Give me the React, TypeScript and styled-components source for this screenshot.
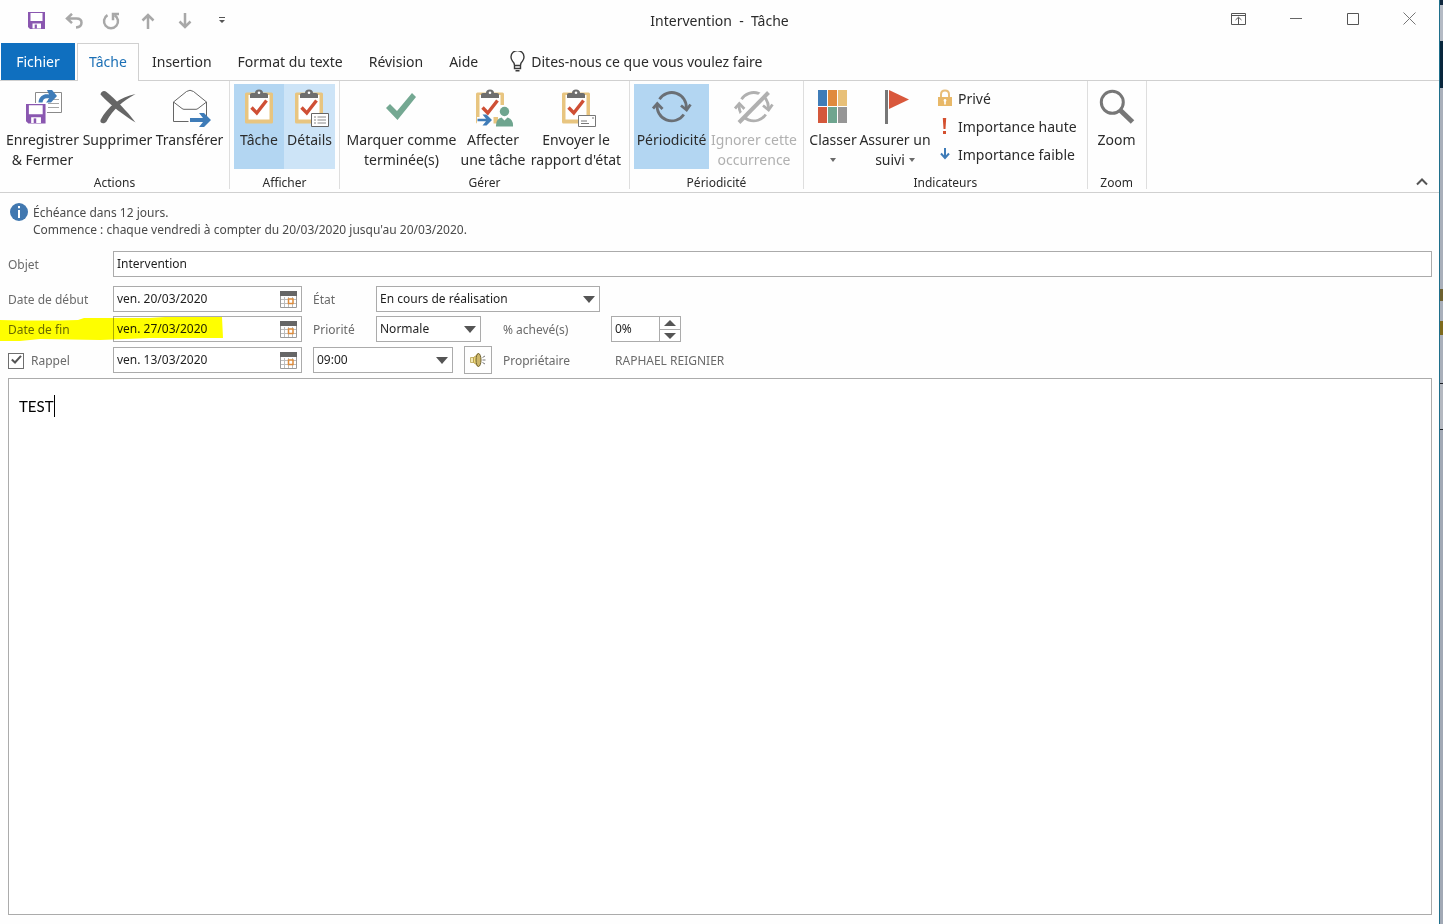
import React from "react";
import styled, { createGlobalStyle, css } from "styled-components";

const GlobalStyle = createGlobalStyle`
  *, *::before, *::after { box-sizing: border-box; }
  body {
    margin: 0;
    background: #fefefe;
    color: #2b2b2b;
    font-family: "Noto Sans", "Open Sans", sans-serif;
    font-size: 14px;
  }
  button, input, select, textarea { font: inherit; color: inherit; margin: 0; }
  button { background: none; border: 0; padding: 0; }
  svg { display: block; flex: none; }
`;

/* ---------- frame ---------- */

const Screen = styled.div`
  display: flex;
  min-height: 100vh;
`;

const Window = styled.div`
  flex: 1;
  min-width: 0;
  display: flex;
  flex-direction: column;
`;

const Behind = styled.div`
  width: 4px;
  border-left: 1px solid #1f6f8b;
  background: linear-gradient(
    #10283f 0 5px,
    #b4bac4 5px 41px,
    #08263c 41px 88px,
    #a9afba 88px 289px,
    #6d6130 289px 301px,
    #a9afba 301px 321px,
    #7d6a1c 321px 335px,
    #a9afba 335px 383px,
    #1c1f24 383px 384px,
    #b4b8c0 384px 429px,
    #1c1f24 429px 430px,
    #a2a9b5 430px
  );
`;

/* ---------- title bar ---------- */

const TitleBar = styled.header`
  display: grid;
  grid-template-columns: 1fr auto 1fr;
  align-items: center;
  height: 43px;
  padding-bottom: 2px;
`;

const QuickBar = styled.div`
  display: flex;
  padding-left: 18px;
`;

const QuickButton = styled.button`
  width: 37px;
  height: 32px;
  display: grid;
  place-items: center;
`;

const Title = styled.h1`
  margin: 0;
  font-size: 14px;
  font-weight: 400;
  line-height: 20px;
  white-space: pre;
`;

const Controls = styled.div`
  display: flex;
  justify-content: flex-end;
  padding: 0 1px 4px 0;
`;

const ControlButton = styled.button`
  width: 57px;
  height: 36px;
  display: grid;
  place-items: center;
`;

/* ---------- tabs ---------- */

const TabBar = styled.nav`
  display: flex;
  height: 38px;
  padding-left: 1px;
  border-bottom: 1px solid #d0d0d0;
`;

const Tab = styled.button<{ $kind?: "file" | "active" }>`
  height: 37px;
  padding: 0 13px;
  font-size: 14px;
  white-space: nowrap;
  ${(p) =>
    p.$kind === "file" &&
    css`
      width: 74px;
      margin-right: 2px;
      background: #0f6fbf;
      color: #fff;
    `}
  ${(p) =>
    p.$kind === "active" &&
    css`
      width: 62px;
      height: 38px;
      padding: 0 0 2px;
      border: 1px solid #d0d0d0;
      border-bottom: 0;
      background: #fefefe;
      color: #1b6fb5;
    `}
`;

const TellMe = styled.button`
  display: flex;
  align-items: center;
  gap: 6px;
  height: 37px;
  padding-left: 19px;
  white-space: nowrap;
`;

/* ---------- ribbon ---------- */

const Ribbon = styled.div`
  display: flex;
  height: 112px;
  border-bottom: 1px solid #d0d0d0;
`;

const Group = styled.section`
  display: flex;
  flex-direction: column;
  align-items: center;
  padding: 3px 4px 0;
  border-right: 1px solid #dedede;
  margin-bottom: 3px;
`;

const GroupBody = styled.div`
  display: flex;
  flex: none;
  height: 85px;
`;

const GroupName = styled.h2`
  margin: 5px 0 0;
  font-size: 12px;
  font-weight: 400;
  line-height: 18px;
`;

const BigButton = styled.button<{ $w: number; $fill?: string }>`
  display: flex;
  flex-direction: column;
  align-items: center;
  width: ${(p) => p.$w}px;
  padding-top: 3px;
  gap: 3px;
  background: ${(p) => p.$fill ?? "none"};
  line-height: 20px;
  white-space: nowrap;
  &:disabled { color: #b0b0b0; }
`;

const WithCaret = styled.span`
  display: flex;
  align-items: center;
  justify-content: center;
  gap: 4px;
  height: 20px;
`;

const SmallList = styled.div`
  display: flex;
  flex-direction: column;
  padding: 0 6px 0 5px;
`;

const SmallButton = styled.button`
  display: flex;
  align-items: center;
  gap: 5px;
  height: 28px;
  white-space: nowrap;
`;

const Collapse = styled.button`
  align-self: flex-end;
  margin: 0 11px 3px auto;
  padding: 3px 0;
`;

/* ---------- form ---------- */

const InfoBar = styled.div`
  display: flex;
  gap: 5px;
  padding: 10px 10px 0;
  height: 58px;
  color: #4a4a4a;
  font-size: 12px;
  line-height: 17px;
`;

const InfoText = styled.p`
  margin: 0;
  padding-top: 1px;
`;

const Form = styled.form`
  display: flex;
  flex-direction: column;
  gap: 4px;
  padding: 0 7px 0 8px;
  font-size: 12px;
`;

const Row = styled.div<{ $after?: number }>`
  position: relative;
  display: flex;
  height: 26px;
  align-items: center;
  margin-bottom: ${(p) => p.$after ?? 0}px;
`;

const Label = styled.label<{ $w: number }>`
  display: flex;
  align-items: center;
  width: ${(p) => p.$w}px;
  padding-top: 1px;
  color: #6a6a6a;
  white-space: nowrap;
`;

const Frame = styled.div<{ $w?: number; $after?: number }>`
  position: relative;
  display: flex;
  ${(p) => (p.$w ? `width: ${p.$w}px;` : "flex: 1;")}
  height: 26px;
  margin-right: ${(p) => p.$after ?? 0}px;
  border: 1px solid #ababab;
  background: #fff;
  color: #1e1e1e;
`;

const TextInput = styled.input`
  flex: 1;
  min-width: 0;
  padding: 0 3px 2px;
  border: 0;
  outline: 0;
  background: none;
`;

const DateButton = styled.button`
  width: 26px;
  display: grid;
  place-items: center;
`;

const SelectBox = styled.select`
  flex: 1;
  appearance: none;
  padding: 0 3px 2px;
  border: 0;
  outline: 0;
  background: none;
`;

const SelectArrow = styled.span`
  position: absolute;
  right: 4px;
  top: 9px;
  pointer-events: none;
`;

const Spinner = styled.div`
  display: grid;
  grid-template-rows: 1fr 1fr;
  width: 21px;
  border-left: 1px solid #ababab;
`;

const SpinButton = styled.button`
  display: grid;
  place-items: center;
  & + & { border-top: 1px solid #ababab; }
`;

const SoundButton = styled.button`
  display: grid;
  place-items: center;
  width: 28px;
  height: 28px;
  margin-right: 11px;
  border: 1px solid #ababab;
`;

const Check = styled.input`
  appearance: none;
  width: 16px;
  height: 16px;
  margin-right: 7px;
  border: 1px solid #6e6e6e;
  background: #fff;
`;

const Tick = styled.svg`
  position: absolute;
  left: 3px;
  top: 8px;
  pointer-events: none;
`;

const Owner = styled.output`
  color: #6a6a6a;
`;

const Marker = styled.svg`
  position: absolute;
  left: -8px;
  top: 0;
  mix-blend-mode: multiply;
  pointer-events: none;
`;

const Editor = styled.div`
  position: relative;
  flex: 1;
  display: flex;
  margin: 5px 7px 9px 8px;
  border: 1px solid #ababab;
  background: #fff;
`;

const Body = styled.textarea`
  flex: 1;
  padding: 16px 10px;
  border: 0;
  outline: 0;
  resize: none;
  background: none;
  color: #000;
  font: 15px/22px Lato, sans-serif;
`;

const Caret = styled.span`
  position: absolute;
  left: 45px;
  top: 16px;
  width: 1px;
  height: 22px;
  background: #000;
`;

/* ---------- icons ---------- */

const Floppy = ({ x = 0, y = 0, s = 1 }) => (
  <g transform={`translate(${x} ${y}) scale(${s})`}>
    <path d="M0 0h17v17H2L0 15z" fill="#8a57b0" />
    <path d="M2.5 1h12v8h-12zM4.5 11.5h8.500V16.500H4.5z" fill="#fff" />
    <path d="M6.7 12.500h2.2v4H6.7z" fill="#8a57b0" />
  </g>
);

const Big = ({ children }: { children: React.ReactNode }) => (
  <svg width="40" height="40" viewBox="0 0 40 40" fill="none" overflow="visible" aria-hidden="true">
    {children}
  </svg>
);

const BlueArrow = ({ x, y, w }: { x: number; y: number; w: number }) => (
  <path
    d={`M${x} ${y - 2}H${x + w - 7}l-4 -5h5l7 7l-7 7h-5l4 -5H${x}z`}
    fill="#3f7cb8"
  />
);

const Clipboard = ({ x = 0 }) => (
  <g transform={`translate(${x} 0)`}>
    <rect x="6" y="5.5" width="28" height="31" rx="1.5" fill="#e8c580" />
    <path d="M9.5 8H30.5V32.5H9.5z" fill="#fff" />
    <path d="M11 11V7.5Q11 6 13 6H16Q16 2.5 20 2.5T24 6H27Q29 6 29 7.5V11z" fill="#6e6e6e" />
    <circle cx="20" cy="5.8" r="1.3" fill="#fff" />
    <path d="M12.5 20.5L17.8 26L27.5 13.5" stroke="#cf4f35" strokeWidth="3.4" />
  </g>
);

const Cycle = ({ color, struck }: { color: string; struck?: boolean }) => (
  <g stroke={color} strokeWidth="2.8">
    <path d="M7.5 12.2A14.6 14.6 0 0 1 34.3 21.5" />
    <path d="M31.8 27.5A14.6 14.6 0 0 1 5.3 17" />
    <path d="M1 21.5L5.3 16.5L10.5 22" />
    <path d="M29 18.5L34.6 23L38.5 17.5" />
    {struck && (
      <>
        <path d="M3 34L32 4" stroke="#fefefe" strokeWidth="6" />
        <path d="M5 35.5L34.5 5.5" strokeWidth="4" />
      </>
    )}
  </g>
);

const Down = ({ w = 6, color = "#6a6a6a" }) => (
  <svg width={w} height={w / 2 + 1} viewBox="0 0 6 4" preserveAspectRatio="none" aria-hidden="true">
    <path d="M0 0H6L3 4z" fill={color} />
  </svg>
);

const Calendar = () => (
  <svg width="17" height="17" viewBox="0 0 17 17" aria-hidden="true">
    <path d="M.5 4V16.5H16.5V4" fill="#fff" stroke="#9a9a9a" />
    <path d="M4.5 6V16M8.5 6V16M12.5 6V16M1 8.5H16M1 12.5H16" stroke="#bcbcbc" />
    <path d="M0 0H17V5H0z" fill="#666" />
    <rect x="8.5" y="8" width="4.5" height="4.5" fill="#fff" stroke="#dc8a3a" strokeWidth="1.5" />
  </svg>
);

/* ---------- form parts ---------- */

const DateField = ({ id, value, label }: { id: string; value: string; label?: string }) => (
  <Frame $w={189} $after={11}>
    <TextInput id={id} defaultValue={value} aria-label={label} />
    <DateButton type="button" aria-label="Choisir une date">
      <Calendar />
    </DateButton>
  </Frame>
);

const SelectField = (p: { id: string; value: string; w: number; after?: number; label?: string }) => (
  <Frame $w={p.w} $after={p.after}>
    <SelectBox id={p.id} aria-label={p.label}>
      <option>{p.value}</option>
    </SelectBox>
    <SelectArrow>
      <Down w={12} color="#555" />
    </SelectArrow>
  </Frame>
);

export default function App() {
  return (
    <Screen>
      <GlobalStyle />
      <Window>
        <TitleBar>
          <QuickBar>
            <QuickButton aria-label="Enregistrer">
              <svg width="17" height="17" viewBox="0 0 17 17"><Floppy /></svg>
            </QuickButton>
            <QuickButton aria-label="Annuler">
              <svg width="18" height="16" viewBox="0 0 18 16" fill="none" stroke="#a8a8a8" strokeWidth="2.5">
                <path d="M7 .8L2 5.5L7 10.2M2 5.5H11.5Q16.5 5.5 16.5 9.8T11 14.5" />
              </svg>
            </QuickButton>
            <QuickButton aria-label="Répéter">
              <svg width="18" height="18" viewBox="0 0 18 18" fill="none" stroke="#a8a8a8" strokeWidth="2.5">
                <path d="M5.5 3.2A7 7 0 1 0 12.5 3.2" />
                <path d="M17 2H11V8.2" />
              </svg>
            </QuickButton>
            <QuickButton aria-label="Élément précédent">
              <svg width="14" height="16" viewBox="0 0 14 16" fill="none" stroke="#a8a8a8" strokeWidth="2.5">
                <path d="M7 16V2M1.5 7.5L7 2L12.5 7.5" />
              </svg>
            </QuickButton>
            <QuickButton aria-label="Élément suivant">
              <svg width="14" height="16" viewBox="0 0 14 16" fill="none" stroke="#a8a8a8" strokeWidth="2.5">
                <path d="M7 0V14M1.5 8.5L7 14L12.5 8.5" />
              </svg>
            </QuickButton>
            <QuickButton aria-label="Personnaliser la barre d'outils">
              <svg width="6" height="7" viewBox="0 0 6 7" fill="#555">
                <path d="M0 0H6V1H0zM0 3H6L3 6z" />
              </svg>
            </QuickButton>
          </QuickBar>
          <Title>{"Intervention  -  Tâche"}</Title>
          <Controls>
            <ControlButton aria-label="Options d'affichage du ruban">
              <svg width="15" height="12" viewBox="0 0 15 12" fill="none" stroke="#555">
                <path d="M.5 .5H14.5V11.5H.5zM.5 2.5H14.5M7.5 11V4.5M4.5 7L7.5 4.2L10.5 7" />
              </svg>
            </ControlButton>
            <ControlButton aria-label="Réduire">
              <svg width="12" height="13" viewBox="0 0 12 13" stroke="#666"><path d="M0 6.5H12" /></svg>
            </ControlButton>
            <ControlButton aria-label="Agrandir">
              <svg width="12" height="12" viewBox="0 0 12 12" fill="none" stroke="#555"><path d="M.5 .5H11.5V11.5H.5z" /></svg>
            </ControlButton>
            <ControlButton aria-label="Fermer">
              <svg width="13" height="13" viewBox="0 0 13 13" stroke="#777"><path d="M.5 .5L12.5 12.5M12.5 .5L.5 12.5" /></svg>
            </ControlButton>
          </Controls>
        </TitleBar>

        <TabBar>
          <Tab $kind="file">Fichier</Tab>
          <Tab $kind="active">Tâche</Tab>
          <Tab>Insertion</Tab>
          <Tab>Format du texte</Tab>
          <Tab>Révision</Tab>
          <Tab>Aide</Tab>
          <TellMe>
            <svg width="15" height="21" viewBox="0 0 15 21" fill="none" stroke="#3a3a3a" strokeWidth="1.4">
              <path d="M4.5 14.5Q4.5 12 2.6 10.3A6.5 6.5 0 1 1 12.4 10.3Q10.5 12 10.5 14.5zM4.5 14.5V17.5H10.5V14.5M5.5 19.8H9.5" />
            </svg>
            Dites-nous ce que vous voulez faire
          </TellMe>
        </TabBar>

        <Ribbon>
          <Group>
            <GroupBody>
              <BigButton $w={77}>
                <Big>
                  <path d="M12.5 5.5H38.5V25.5H12.5z" fill="#fff" stroke="#8a8a8a" />
                  <path d="M25 12.5H36M25 16.5H36M25 20.5H36" stroke="#a5a5a5" />
                  <path d="M15.5 15.5C16 9 21 6.5 26 7.5L24 3H29L34 9L28 15.5H23L26.3 11.5C22 10.5 20 12 19.5 15.5z" fill="#3f7cb8" />
                  <path d="M2 16H24V38H2z" fill="#fefefe" />
                  <Floppy x={3} y={17} s={1.15} />
                </Big>
                <span>Enregistrer<br />&amp; Fermer</span>
              </BigButton>
              <BigButton $w={73}>
                <Big>
                  <path d="M2.5 7.5C3 4.5 6 3 8.5 5C17 12 29 24 37.5 35.5C27 29 13 19 2.5 7.5z" fill="#666" />
                  <path d="M2.5 33C9 20 22 10 37.5 7C25 14 15 22 8.5 34.5C6.5 37.5 1.5 36.5 2.5 33z" fill="#666" />
                </Big>
                <span>Supprimer</span>
              </BigButton>
              <BigButton $w={71}>
                <Big>
                  <path d="M3.5 15L16.5 4.5Q20 2 23.5 4.5L36.5 15V34.5H3.5zM3.5 15L12 21.5Q13 22.3 14 22.3H26Q27 22.3 28 21.5L36.5 15" fill="#fff" stroke="#666" />
                  <path d="M18.5 29H41V38H18.5z" fill="#fefefe" />
                  <BlueArrow x={20} y={33} w={20} />
                </Big>
                <span>Transférer</span>
              </BigButton>
            </GroupBody>
            <GroupName>Actions</GroupName>
          </Group>

          <Group>
            <GroupBody>
              <BigButton $w={50} $fill="#b3d6f2">
                <Big><Clipboard /></Big>
                <span>Tâche</span>
              </BigButton>
              <BigButton $w={51} $fill="#cde4f7">
                <Big>
                  <Clipboard x={-1} />
                  <path d="M21.5 26.5H38.5V39.5H21.5z" fill="#fff" stroke="#666" />
                  <path d="M24 30H26M24 33H26M24 36H26M27.5 30H36M27.5 33H36M27.5 36H36" stroke="#888" />
                </Big>
                <span>Détails</span>
              </BigButton>
            </GroupBody>
            <GroupName>Afficher</GroupName>
          </Group>

          <Group>
            <GroupBody>
              <BigButton $w={115}>
                <Big>
                  <path d="M4 21L8 17L15 24L30 6L34 10L15.5 33z" fill="#74a892" />
                </Big>
                <span>Marquer comme<br />terminée(s)</span>
              </BigButton>
              <BigButton $w={68}>
                <Big>
                  <Clipboard x={-3} />
                  <path d="M4 30H19L23 29L26 18H40V40H4z" fill="#fefefe" />
                  <path d="M20.5 30H25V36.5H20.5z" fill="#e8c580" />
                  <path d="M4.5 31.7H13L9.5 27.5H13.5L19 33L13.5 38.5H9.5L13 34.3H4.5z" fill="#3f7cb8" />
                  <circle cx="31.5" cy="24.5" r="4.7" fill="#6fa58f" />
                  <path d="M23 39.5Q22.5 32 28.5 30.5L31.5 33.5L34.5 30.5Q40.5 32 40 39.5z" fill="#6fa58f" />
                </Big>
                <span>Affecter<br />une tâche</span>
              </BigButton>
              <BigButton $w={98}>
                <Big>
                  <Clipboard />
                  <path d="M22.5 28.5H39.5V39.5H22.5z" fill="#fff" stroke="#777" />
                  <path d="M25 34H31M25 36.5H33M36 31H38" stroke="#777" />
                </Big>
                <span>Envoyer le<br />rapport d'état</span>
              </BigButton>
            </GroupBody>
            <GroupName>Gérer</GroupName>
          </Group>

          <Group>
            <GroupBody>
              <BigButton $w={75} $fill="#b3d6f2">
                <Big><Cycle color="#6a6f75" /></Big>
                <span>Périodicité</span>
              </BigButton>
              <BigButton $w={90} disabled>
                <Big><Cycle color="#b0b0b0" struck /></Big>
                <span>Ignorer cette<br />occurrence</span>
              </BigButton>
            </GroupBody>
            <GroupName>Périodicité</GroupName>
          </Group>

          <Group>
            <GroupBody>
              <BigButton $w={50}>
                <Big>
                  <path d="M5 3H14V19H5z" fill="#3f7cb8" />
                  <path d="M15 3H24V19H15z" fill="#e08a3c" />
                  <path d="M25 3H34V19H25z" fill="#e8c078" />
                  <path d="M5 20H14V36H5z" fill="#d4583c" />
                  <path d="M15 20H24V36H15z" fill="#6fa58f" />
                  <path d="M25 20H34V36H25z" fill="#969696" />
                </Big>
                <span>
                  Classer
                  <WithCaret><Down /></WithCaret>
                </span>
              </BigButton>
              <BigButton $w={74}>
                <Big>
                  <path d="M10 3H13V37H10z" fill="#777" />
                  <path d="M14 3L34 12.5L14 22z" fill="#d9583c" />
                </Big>
                <span>
                  Assurer un
                  <WithCaret>suivi <Down /></WithCaret>
                </span>
              </BigButton>
              <SmallList>
                <SmallButton>
                  <svg width="16" height="18" viewBox="0 0 16 18">
                    <path d="M4 8V5.5Q4 1.5 8 1.5T12 5.5V8" fill="none" stroke="#e8bd78" strokeWidth="2" />
                    <path d="M1 8H15V17H1z" fill="#e8b868" />
                    <path d="M8 10a1.5 1.5 0 0 1 .8 2.7V15.5H7.2V12.7A1.5 1.5 0 0 1 8 10z" fill="#fff" />
                  </svg>
                  Privé
                </SmallButton>
                <SmallButton>
                  <svg width="16" height="16" viewBox="0 0 16 16" fill="#d4502f">
                    <path d="M5.8 0H9.2L8.5 11H6.5zM6 13H9V16H6z" />
                  </svg>
                  Importance haute
                </SmallButton>
                <SmallButton>
                  <svg width="16" height="16" viewBox="0 0 16 16" fill="none" stroke="#3f7cb8" strokeWidth="2">
                    <path d="M8 2V12M4 7.5L8 12L12 7.5" />
                  </svg>
                  Importance faible
                </SmallButton>
              </SmallList>
            </GroupBody>
            <GroupName>Indicateurs</GroupName>
          </Group>

          <Group>
            <GroupBody>
              <BigButton $w={50}>
                <Big>
                  <circle cx="15.3" cy="15.3" r="11" stroke="#777" strokeWidth="3" />
                  <path d="M23 23L35.5 35" stroke="#777" strokeWidth="5" />
                </Big>
                <span>Zoom</span>
              </BigButton>
            </GroupBody>
            <GroupName>Zoom</GroupName>
          </Group>

          <Collapse aria-label="Réduire le ruban">
            <svg width="12" height="8" viewBox="0 0 12 8" fill="none" stroke="#555" strokeWidth="2">
              <path d="M1 6.5L6 1.5L11 6.5" />
            </svg>
          </Collapse>
        </Ribbon>

        <InfoBar>
          <svg width="18" height="18" viewBox="0 0 18 18" aria-hidden="true">
            <circle cx="9" cy="9" r="9" fill="#4178b0" />
            <path d="M8 3H10V5.3H8zM8 7H10V15H8z" fill="#fff" />
          </svg>
          <InfoText>
            Échéance dans 12 jours.
            <br />
            Commence : chaque vendredi à compter du 20/03/2020 jusqu'au 20/03/2020.
          </InfoText>
        </InfoBar>

        <Form>
          <Row $after={5}>
            <Label $w={105} htmlFor="objet">Objet</Label>
            <Frame>
              <TextInput id="objet" defaultValue="Intervention" />
            </Frame>
          </Row>
          <Row>
            <Label $w={105} htmlFor="debut">Date de début</Label>
            <DateField id="debut" value="ven. 20/03/2020" />
            <Label $w={63} htmlFor="etat">État</Label>
            <SelectField id="etat" value="En cours de réalisation" w={224} />
          </Row>
          <Row $after={1}>
            <Label $w={105} htmlFor="fin">Date de fin</Label>
            <DateField id="fin" value="ven. 27/03/2020" />
            <Label $w={63} htmlFor="priorite">Priorité</Label>
            <SelectField id="priorite" value="Normale" w={105} after={22} />
            <Label $w={108} htmlFor="acheve">% achevé(s)</Label>
            <Frame $w={70}>
              <TextInput id="acheve" defaultValue="0%" />
              <Spinner>
                <SpinButton type="button" aria-label="Augmenter">
                  <svg width="12" height="6" viewBox="0 0 12 6"><path d="M0 6H12L6 0z" fill="#555" /></svg>
                </SpinButton>
                <SpinButton type="button" aria-label="Diminuer">
                  <svg width="12" height="6" viewBox="0 0 12 6"><path d="M0 0H12L6 6z" fill="#555" /></svg>
                </SpinButton>
              </Spinner>
            </Frame>
            <Marker width="224" height="26" viewBox="0 0 224 26" aria-hidden="true">
              <path d="M0 4Q40 5 78 4L84 2H150L165 1H222L223 22H150L100 24L40 23L20 25H0z" fill="#ffff00" />
            </Marker>
          </Row>
          <Row>
            <Label $w={105} htmlFor="rappel">
              <Check type="checkbox" id="rappel" defaultChecked />
              <Tick width="11" height="9" viewBox="0 0 11 9" fill="none" stroke="#555" strokeWidth="2">
                <path d="M.8 4.5L4 7.5L10 .8" />
              </Tick>
              Rappel
            </Label>
            <DateField id="date-rappel" value="ven. 13/03/2020" label="Date du rappel" />
            <SelectField id="heure" value="09:00" w={140} after={11} label="Heure du rappel" />
            <SoundButton type="button" aria-label="Son du rappel">
              <svg width="16" height="16" viewBox="0 0 16 16">
                <path d="M.5 5.5H4V10.5H.5z" fill="#f3e8b4" stroke="#c4b26a" />
                <path d="M3.5 5.5Q6 4.5 8 1.5V14.5Q6 11.500 3.500 10.5z" fill="#efd978" stroke="#b89f50" />
                <ellipse cx="8.5" cy="8" rx="2.5" ry="6.5" fill="#cdb668" stroke="#6f6230" />
                <path d="M12.5 5.5L15 4M12.5 8H15.5M12.5 10.5L15 12" stroke="#777" />
              </svg>
            </SoundButton>
            <Label $w={112} as="span">Propriétaire</Label>
            <Owner>RAPHAEL REIGNIER</Owner>
          </Row>
        </Form>

        <Editor>
          <Body aria-label="Corps de la tâche" defaultValue="TEST" spellCheck={false} />
          <Caret />
        </Editor>
      </Window>
      <Behind />
    </Screen>
  );
}
